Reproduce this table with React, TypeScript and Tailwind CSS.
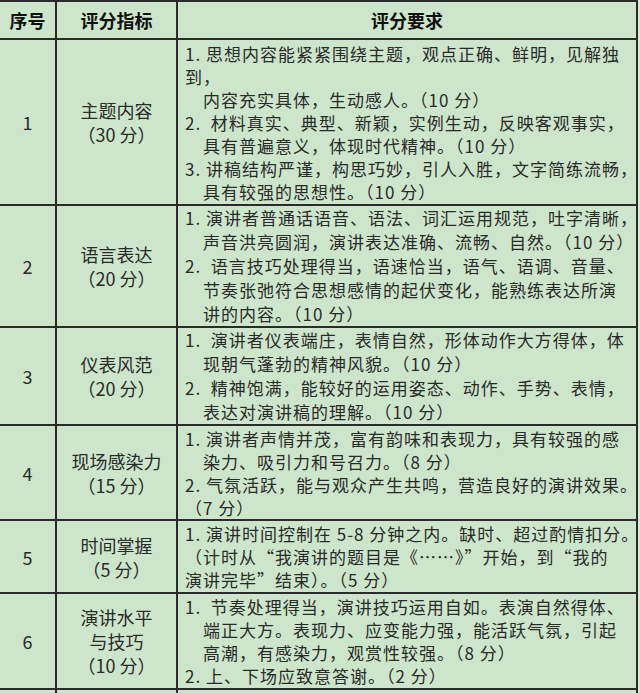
import React from "react";

type Line = { t: string; i?: boolean };
type Row = { n: string; name: string[]; h: number; lines: Line[] };

const rows: Row[] = [
  {
    n: "1",
    name: ["主题内容", "（30 分）"],
    h: 166,
    lines: [
      { t: "1.\u00a0思想内容能紧紧围绕主题，观点正确、鲜明，见解独" },
      { t: "到，" },
      { t: "内容充实具体，生动感人。（10 分）", i: true },
      { t: "2.\u00a0\u00a0材料真实、典型、新颖，实例生动，反映客观事实，" },
      { t: "具有普遍意义，体现时代精神。（10 分）", i: true },
      { t: "3.\u00a0讲稿结构严谨，构思巧妙，引人入胜，文字简练流畅，" },
      { t: "具有较强的思想性。（10 分）", i: true },
    ],
  },
  {
    n: "2",
    name: ["语言表达", "（20 分）"],
    h: 122,
    lines: [
      { t: "1.\u00a0演讲者普通话语音、语法、词汇运用规范，吐字清晰，" },
      { t: "声音洪亮圆润，演讲表达准确、流畅、自然。（10 分）", i: true },
      { t: "2.\u00a0\u00a0语言技巧处理得当，语速恰当，语气、语调、音量、" },
      { t: "节奏张弛符合思想感情的起伏变化，能熟练表达所演", i: true },
      { t: "讲的内容。（10 分）", i: true },
    ],
  },
  {
    n: "3",
    name: ["仪表风范", "（20 分）"],
    h: 98,
    lines: [
      { t: "1.\u00a0\u00a0演讲者仪表端庄，表情自然，形体动作大方得体，体" },
      { t: "现朝气蓬勃的精神风貌。（10 分）", i: true },
      { t: "2.\u00a0\u00a0精神饱满，能较好的运用姿态、动作、手势、表情，" },
      { t: "表达对演讲稿的理解。（10 分）", i: true },
    ],
  },
  {
    n: "4",
    name: ["现场感染力", "（15 分）"],
    h: 95,
    lines: [
      { t: "1.\u00a0演讲者声情并茂，富有韵味和表现力，具有较强的感" },
      { t: "染力、吸引力和号召力。（8 分）", i: true },
      { t: "2.\u00a0气氛活跃，能与观众产生共鸣，营造良好的演讲效果。" },
      { t: "（7 分）" },
    ],
  },
  {
    n: "5",
    name: ["时间掌握", "（5 分）"],
    h: 73,
    lines: [
      { t: "1.\u00a0演讲时间控制在 5-8 分钟之内。缺时、超过酌情扣分。" },
      { t: "（计时从“我演讲的题目是《……》”开始，到“我的" },
      { t: "演讲完毕”结束）。（5 分）" },
    ],
  },
  {
    n: "6",
    name: ["演讲水平", "与技巧", "（10 分）"],
    h: 96,
    lines: [
      { t: "1.\u00a0\u00a0节奏处理得当，演讲技巧运用自如。表演自然得体、" },
      { t: "端正大方。表现力、应变能力强，能活跃气氛，引起", i: true },
      { t: "高潮，有感染力，观赏性较强。（8 分）", i: true },
      { t: "2.\u00a0上、下场应致意答谢。（2 分）" },
    ],
  },
];

export default function App() {
  return (
    <div
      className="w-[640px] h-[693px] overflow-hidden bg-[#d6ebd6] text-[#2a2a2a]"
      style={{ fontFamily: '"Noto Sans CJK SC", "Noto Sans", sans-serif' }}
    >
      <div className="w-[638px] bg-[#cde6cb] border-t-2 border-r-2 border-[#2b2b2b]">
        <div className="grid grid-cols-[57px_121px_458px] h-[38px] border-b-2 border-[#2b2b2b] text-[18px] font-bold text-[#111]">
          <div className="flex items-center justify-center border-r-2 border-[#2b2b2b]">序号</div>
          <div className="flex items-center justify-center border-r-2 border-[#2b2b2b]">评分指标</div>
          <div className="flex items-center justify-center">评分要求</div>
        </div>
        {rows.map((r) => (
          <div
            key={r.n}
            className="grid grid-cols-[57px_121px_458px] border-b-2 border-[#2b2b2b] text-[18px] leading-[24px]"
            style={{ height: r.h }}
          >
            <div className="flex items-center justify-center border-r-2 border-[#2b2b2b]">{r.n}</div>
            <div className="flex flex-col items-center justify-center border-r-2 border-[#2b2b2b]">
              {r.name.map((s) => (
                <div key={s} className="whitespace-nowrap">{s}</div>
              ))}
            </div>
            <div
              className="flex min-w-0 flex-col justify-center pl-[7px] text-[17px] tracking-[1px]"
              style={{ lineHeight: `${Math.min(24, Math.floor((r.h - 2) / r.lines.length))}px` }}
            >
              {r.lines.map((l, k) => (
                <div key={k} className={`whitespace-nowrap ${l.i ? "pl-[18px]" : ""}`}>
                  {l.t}
                </div>
              ))}
            </div>
          </div>
        ))}
        <div className="grid grid-cols-[57px_121px_458px] h-[10px]">
          <div className="border-r-2 border-[#2b2b2b]" />
          <div className="border-r-2 border-[#2b2b2b]" />
          <div />
        </div>
      </div>
    </div>
  );
}
